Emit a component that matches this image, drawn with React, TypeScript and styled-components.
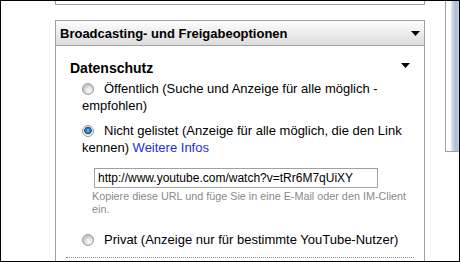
import styled, { createGlobalStyle } from "styled-components";

const GlobalStyle = createGlobalStyle`
  html, body {
    margin: 0;
    padding: 0;
    background: #fff;
  }
  body {
    font-family: "Liberation Sans", Arial, sans-serif;
    color: #000;
  }
`;

const Frame = styled.div`
  width: 460px;
  height: 262px;
  box-sizing: border-box;
  border: 1px solid #000;
  overflow: hidden;
  display: flex;
  background: #fff;
`;

const Gutter = styled.div<{ $w: number }>`
  width: ${(p) => p.$w}px;
  flex: none;
`;

const Main = styled.div`
  width: 370px;
  flex: none;
  display: flex;
  flex-direction: column;
`;

const TopBox = styled.div`
  height: 3px;
  border: 1px solid #a0a0a0;
  border-top: none;
`;

const Panel = styled.section`
  margin-top: 15px;
  flex: 1;
  border: 1px solid #a0a0a0;
  border-bottom: none;
  display: flex;
  flex-direction: column;
`;

const PanelHeader = styled.div`
  height: 24px;
  border-bottom: 1px solid #a0a0a0;
  background: linear-gradient(#fdfdfd, #dcdcdc);
  display: flex;
  align-items: center;
  justify-content: space-between;
  padding: 0 4px;
  font-size: 13px;
  font-weight: bold;
`;

const Arrow = () => (
  <svg width="9" height="5" viewBox="0 0 9 5">
    <polygon points="0,0 9,0 4.5,5" fill="#000" />
  </svg>
);

const PanelBody = styled.div`
  flex: 1;
  margin: 0 10px;
  padding: 14px 4px 0;
  border-bottom: 1px dotted #8a8a8a;
  margin-bottom: 3px;
`;

const SectionTitle = styled.div`
  display: flex;
  justify-content: space-between;
  align-items: flex-start;
  font-size: 14px;
  font-weight: bold;
  line-height: 17px;
  svg {
    margin-top: 3px;
  }
`;

const Option = styled.div<{ $gap: number }>`
  margin: ${(p) => p.$gap}px 0 0 12px;
  font-size: 13px;
  line-height: 17px;
`;

const Radio = styled.span<{ $checked?: boolean }>`
  display: inline-block;
  width: 10px;
  height: 10px;
  border-radius: 50%;
  border: 1px solid #9a9a9a;
  margin-right: 10px;
  vertical-align: -2px;
  background: ${(p) =>
    p.$checked
      ? "radial-gradient(circle at 50% 45%, #8fd0f5 0, #2b7fc4 2px, #17508c 3.5px, #d8d8d8 4px, #fafafa 5px)"
      : "radial-gradient(circle at 60% 65%, #fdfdfd 0, #e6e6e6 3px, #c8c8c8 5px)"};
`;

const Link = styled.a`
  color: #1a2ee0;
  text-decoration: none;
`;

const UrlField = styled.input`
  display: block;
  box-sizing: border-box;
  width: 284px;
  height: 20px;
  margin: 12px 0 0 12px;
  padding: 0 3px;
  border: 1px solid #a0a0a0;
  font-family: "Liberation Sans", Arial, sans-serif;
  font-size: 12px;
  color: #000;
  background: #fff;
  outline: none;
`;

const Hint = styled.div`
  margin: 2px 0 0 10px;
  font-size: 10.8px;
  line-height: 13px;
  color: #8a8a8a;
`;

const Side = styled.div`
  width: 13px;
  height: 150px;
  flex: none;
  border-left: 1px solid #a0a0a0;
  border-bottom: 1px solid #a0a0a0;
  display: flex;
  justify-content: flex-end;
`;

const SideStrip = styled.div`
  width: 8px;
  background: linear-gradient(90deg, #dfe6ef, #a9bbd4 60%, #c3cfdf);
`;

export default function App() {
  return (
    <>
      <GlobalStyle />
      <Frame>
        <Gutter $w={54} />
        <Main>
          <TopBox />
          <Panel>
            <PanelHeader>
              <span>Broadcasting- und Freigabeoptionen</span>
              <Arrow />
            </PanelHeader>
            <PanelBody>
              <SectionTitle>
                <span>Datenschutz</span>
                <Arrow />
              </SectionTitle>
              <Option $gap={3}>
                <Radio />
                Öffentlich (Suche und Anzeige für alle möglich - empfohlen)
              </Option>
              <Option $gap={8}>
                <Radio $checked />
                Nicht gelistet (Anzeige für alle möglich, die den Link kennen){" "}
                <Link href="#">Weitere Infos</Link>
                <UrlField readOnly value="http://www.youtube.com/watch?v=tRr6M7qUiXY" />
                <Hint>Kopiere diese URL und füge Sie in eine E-Mail oder den IM-Client ein.</Hint>
              </Option>
              <Option $gap={15}>
                <Radio />
                Privat (Anzeige nur für bestimmte YouTube-Nutzer)
              </Option>
            </PanelBody>
          </Panel>
        </Main>
        <Gutter $w={20} />
        <Side>
          <SideStrip />
        </Side>
      </Frame>
    </>
  );
}
